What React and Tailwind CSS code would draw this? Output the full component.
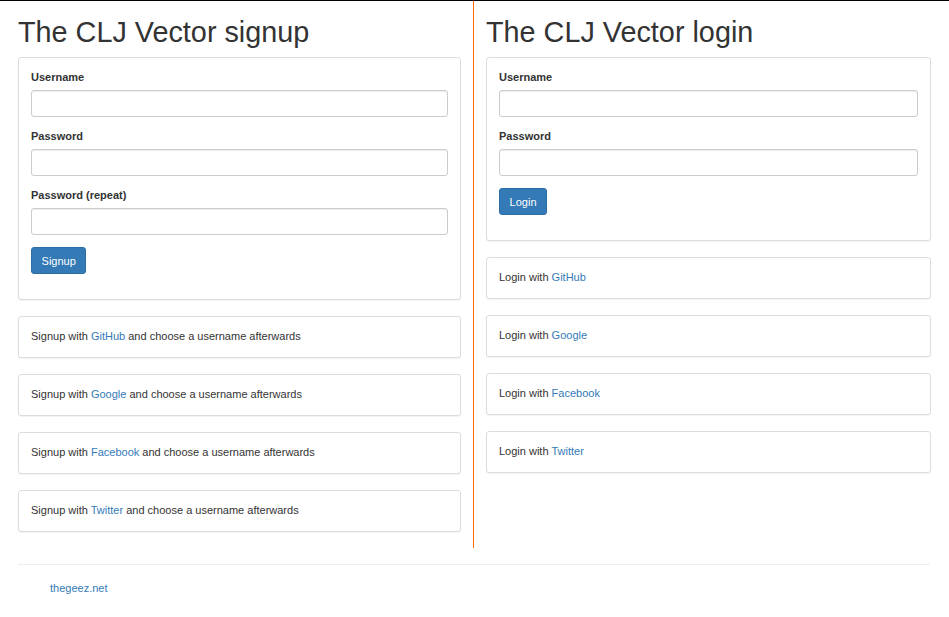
import React from 'react';

const font = { fontFamily: '"Liberation Sans", Arial, sans-serif' };

function Field({ label }) {
  return (
    <div className="mb-[12px]">
      <label className="block mb-[6px] font-bold text-[11px] leading-[14px] text-[#333]">{label}</label>
      <input
        type="text"
        className="block w-full h-[27.2px] px-[9.6px] border border-[#ccc] rounded-[3px] bg-white shadow-[inset_0_1px_1px_rgba(0,0,0,0.075)] outline-none"
      />
    </div>
  );
}

function Panel({ children, className = '' }) {
  return (
    <div className={`mb-[16px] px-[12px] bg-white border border-[#ddd] rounded-[3px] shadow-[0_1px_1px_rgba(0,0,0,0.05)] ${className}`}>
      {children}
    </div>
  );
}

function ProviderPanel({ prefix, name, suffix }) {
  return (
    <Panel className="pt-[11px] pb-[13px]">
      <p className="text-[11px] leading-[16px] text-[#333]">
        {prefix} <a href="#" className="text-[#337ab7]">{name}</a>
        {suffix ? ' ' + suffix : ''}
      </p>
    </Panel>
  );
}

function SubmitButton({ children }) {
  return (
    <div className="mb-[12px]">
      <button className="h-[27.2px] px-[9.6px] bg-[#337ab7] border border-[#2e6da4] rounded-[3px] text-white text-[11px] leading-[16px]">
        {children}
      </button>
    </div>
  );
}

const providers = ['GitHub', 'Google', 'Facebook', 'Twitter'];

export default function App() {
  return (
    <div className="min-h-[617px] bg-white border-t border-black text-[#333]" style={font}>
      <div className="flex px-[6px]">
        {/* Signup column */}
        <div className="w-[468px] px-[12px] border-r border-[#ff6a00]">
          <h1 className="mt-[16px] mb-[8px] text-[28.8px] leading-[31.7px] font-normal text-[#333]">
            The CLJ Vector signup
          </h1>
          <Panel className="pt-[12px] pb-[13px]">
            <Field label="Username" />
            <Field label="Password" />
            <Field label="Password (repeat)" />
            <SubmitButton>Signup</SubmitButton>
          </Panel>
          {providers.map((p) => (
            <ProviderPanel key={p} prefix="Signup with" name={p} suffix="and choose a username afterwards" />
          ))}
        </div>

        {/* Login column */}
        <div className="flex-1 px-[12px]">
          <h1 className="mt-[16px] mb-[8px] text-[28.8px] leading-[31.7px] font-normal text-[#333]">
            The CLJ Vector login
          </h1>
          <Panel className="pt-[12px] pb-[13px]">
            <Field label="Username" />
            <Field label="Password" />
            <SubmitButton>Login</SubmitButton>
          </Panel>
          {providers.map((p) => (
            <ProviderPanel key={p} prefix="Login with" name={p} />
          ))}
        </div>
      </div>

      <div className="px-[18px] pr-[19px]">
        <hr className="mt-[16px] mb-[15px] border-0 border-t border-[#eee]" />
        <div className="pl-[32px] text-[11px] leading-[16px]">
          <a href="#" className="text-[#337ab7]">thegeez.net</a>
        </div>
      </div>
    </div>
  );
}
